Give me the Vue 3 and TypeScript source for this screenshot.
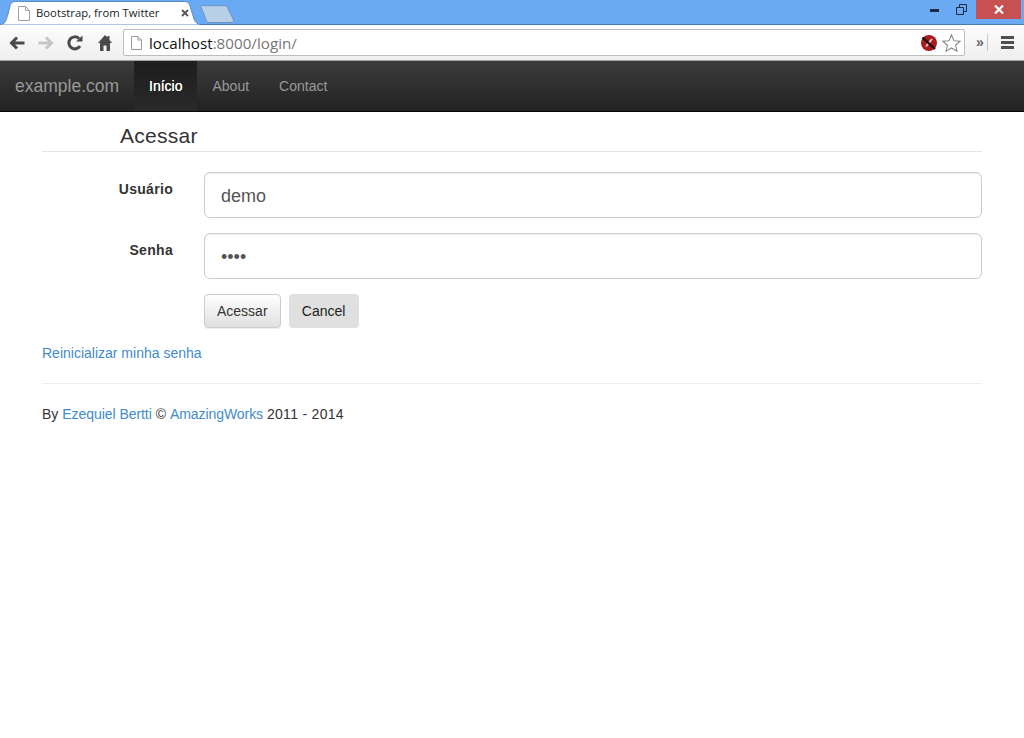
<script setup lang="ts">
const navItems: { label: string; active?: boolean }[] = [
  { label: 'Início', active: true },
  { label: 'About' },
  { label: 'Contact' },
]
</script>

<template>
  <div class="page">
    <div class="tabstrip">
      <div class="tab">
        <svg class="tab-shape" width="200" height="25" viewBox="0 0 200 25">
          <path d="M0 24.500C5 24.500 6 21 8 14L10 6C11 2.500 13 1.500 16 1.500H184C187 1.500 189 2.500 190 6L194 19C195 22.500 198 24.500 200 24.500V25H0Z" fill="#fff" stroke="#5f8ec4" stroke-width="1" />
        </svg>
        <svg class="doc" width="12" height="15" viewBox="0 0 12 15">
          <path d="M.5.5H7.500L11.500 4.500V14.500H.5Z M7.500.5V4.500H11.500" fill="#fff" stroke="#a0a0a0" />
        </svg>
        <span class="tab-title">Bootstrap, from Twitter</span>
        <svg class="tab-close" width="8" height="8" viewBox="0 0 8 8">
          <path d="M1 1L7 7M7 1L1 7" stroke="#555" stroke-width="1.800" />
        </svg>
      </div>
      <svg class="newtab" width="36" height="19" viewBox="0 0 36 19">
        <path d="M.8 1.500C.8 1 1 .7 2 .7H25C26.500 .7 27 1.500 27.500 2.500L33.500 15C34 16.500 33 17.500 32 17.500H9C7.500 17.500 7 17 6.500 16Z" fill="#b8cfe8" stroke="#6d93bd" />
      </svg>
      <div class="spacer"></div>
      <div class="win-btns">
        <svg width="9" height="3" viewBox="0 0 9 3" class="win-min"><rect width="9" height="3" fill="#1d2b3a" /></svg>
        <svg width="11" height="11" viewBox="0 0 11 11" class="win-max">
          <path d="M.5 3.500H7.500V10.500H.5Z M3.500 3V.5H10.500V7.500H8" fill="none" stroke="#1d2b3a" />
        </svg>
        <div class="win-close">
          <svg width="10" height="9" viewBox="0 0 10 9"><path d="M1 .5L9 8.500M9 .5L1 8.500" stroke="#fff" stroke-width="2.200" /></svg>
        </div>
      </div>
    </div>

    <div class="toolbar">
      <svg class="tool back" width="16" height="14" viewBox="0 0 16 14">
        <path d="M15.500 7H3M8 1.500L2.500 7L8 12.500" fill="none" stroke="#4a4a4a" stroke-width="3" />
      </svg>
      <svg class="tool fwd" width="16" height="14" viewBox="0 0 16 14">
        <path d="M.5 7H13M8 1.500L13.500 7L8 12.500" fill="none" stroke="#c6c6c6" stroke-width="3" />
      </svg>
      <svg class="tool reload" width="16" height="16" viewBox="0 0 16 16">
        <path d="M13 11A6 6 0 1 1 12 3.500" fill="none" stroke="#4a4a4a" stroke-width="3" />
        <path d="M9 6.500L15.500 .5V6.500Z" fill="#4a4a4a" />
      </svg>
      <svg class="tool home" width="14" height="16" viewBox="0 0 14 16">
        <path d="M7 0L0 8H2V16H5.500V10.500H8.500V16H12V8H14L11.500 5V1H9.500V2.500Z" fill="#4a4a4a" />
      </svg>
      <div class="omnibox">
        <svg class="omni-doc" width="11" height="14" viewBox="0 0 11 14">
          <path d="M.5.5H7L10.500 4V13.500H.5Z M7 .5V4H10.500" fill="#fff" stroke="#999" />
        </svg>
        <span class="url"><span class="host">localhost</span>:8000/login/</span>
        <div class="spacer"></div>
        <svg class="ext" width="16" height="16" viewBox="0 0 16 16">
          <circle cx="8" cy="8" r="8" fill="#a81c1f" />
          <path d="M5 11.500L11 4" stroke="#f2c4c4" stroke-width="2" />
          <path d="M1.500 2.500L14 14" stroke="#111" stroke-width="2.200" />
        </svg>
        <svg class="star" width="19" height="18" viewBox="0 0 19 18">
          <path d="M9.500 1L12 6.700L18.200 7.200L13.500 11.300L15 17.200L9.500 14L4 17.200L5.500 11.300L.8 7.200L7 6.700Z" fill="#fff" stroke="#8a8a8a" stroke-width="1.100" />
        </svg>
      </div>
      <span class="chevrons">»</span>
      <div class="sep"></div>
      <div class="menu"><i></i><i></i><i></i></div>
    </div>

    <nav class="navbar">
      <a class="brand">example.com</a>
      <ul class="nav">
        <li v-for="item in navItems" :key="item.label" :class="{ active: item.active }">{{ item.label }}</li>
      </ul>
    </nav>

    <main class="content">
      <h1 class="legend">Acessar</h1>
      <form class="form" @submit.prevent>
        <div class="group">
          <label class="label">Usuário</label>
          <input class="input" type="text" value="demo" />
        </div>
        <div class="group">
          <label class="label">Senha</label>
          <input class="input" type="password" value="demo" />
        </div>
        <div class="actions">
          <button class="btn" type="submit">Acessar</button>
          <button class="btn cancel" type="button">Cancel</button>
        </div>
      </form>
      <p class="reset"><a>Reinicializar minha senha</a></p>
      <hr class="rule" />
      <footer class="footer">By <a class="author">Ezequiel Bertti</a> © <a class="works">AmazingWorks</a> <span class="years">2011 - 2014</span></footer>
    </main>
  </div>
</template>

<style>
html, body { margin: 0; background: #fff; }
</style>

<style scoped>
.page {
  width: 1024px;
  height: 738px;
  overflow: hidden;
  font-family: "Liberation Sans", Arial, sans-serif;
  font-size: 14px;
  line-height: 20px;
  color: #333;
  background: #fff;
}
.spacer { flex: 1; }

.tabstrip {
  height: 25px;
  box-sizing: border-box;
  display: flex;
  background: #6aaaf5;
  border-bottom: 1px solid #4a7ab0;
}
.tab {
  position: relative;
  width: 200px;
  height: 25px;
  flex: none;
  display: flex;
  align-items: center;
}
.tab-shape { position: absolute; left: 0; top: 0; }
.doc { position: relative; margin: 2px 0 0 18px; }
.tab-title {
  position: relative;
  margin: 1px 0 0 6px;
  font-family: "Open Sans", "Noto Sans", sans-serif;
  font-size: 11.300px;
  color: #222;
  white-space: nowrap;
  width: 144px;
}
.tab-close { position: relative; margin: 1px 0 0 1px; }
.newtab { margin: 5px 0 0 0; flex: none; }
.win-btns { display: flex; align-items: flex-start; height: 19px; }
.win-min { margin: 9px 0 0 0; }
.win-max { margin: 4px 0 0 17px; }
.win-close {
  width: 45px;
  height: 19px;
  margin-left: 9px;
  margin-right: 3px;
  background: #c75050;
  display: flex;
  align-items: center;
  justify-content: center;
}

.toolbar {
  height: 36px;
  box-sizing: border-box;
  display: flex;
  align-items: center;
  background: linear-gradient(#fdfdfd, #eeeeee);
  border-bottom: 1px solid #a4a4a4;
}
.tool { flex: none; }
.back { margin-left: 9px; }
.fwd { margin-left: 13px; }
.reload { margin-left: 13px; }
.home { margin-left: 15px; margin-right: 11px; }
.omnibox {
  width: 842px;
  height: 27px;
  box-sizing: border-box;
  display: flex;
  align-items: center;
  background: #fff;
  border: 1px solid #bdbdbd;
  border-radius: 2px;
  flex: none;
}
.omni-doc { margin-left: 7px; flex: none; }
.url {
  margin-left: 7px;
  font-family: "Open Sans", "Noto Sans", sans-serif;
  font-size: 15.200px;
  color: #777;
  white-space: nowrap;
}
.host { color: #111; }
.ext { margin-right: 5px; flex: none; }
.star { margin-right: 3px; flex: none; }
.chevrons { margin-left: 11px; font-size: 14px; font-weight: bold; color: #666; line-height: 1; margin-top: -2px; }
.sep { width: 1px; height: 17px; margin-left: 3px; background: #c4c4c4; }
.menu { display: flex; flex-direction: column; gap: 2px; margin-left: 13px; }
.menu i { display: block; width: 13px; height: 3px; background: #505050; }

.navbar {
  height: 51px;
  box-sizing: border-box;
  display: flex;
  background: linear-gradient(#3b3b3b, #222222);
  border-bottom: 1px solid #080808;
}
.brand {
  margin-left: 15px;
  width: 119px;
  font-size: 17.500px;
  line-height: 50px;
  color: #999;
}
.nav { display: flex; margin: 0; padding: 0; list-style: none; }
.nav li {
  padding: 0 15px;
  line-height: 50px;
  color: #999;
}
.nav li.active {
  color: #fff;
  font-weight: 400;
  text-shadow: 0 0 .5px #fff;
  background: linear-gradient(#1d1d1d, #2a2a2a);
}

.content { padding: 0 42px; }
.legend {
  margin: 0;
  padding: 10px 0 0 78px;
  box-sizing: content-box;
  border-bottom: 1px solid #e5e5e5;
  font-size: 21px;
  font-weight: 400;
  line-height: 27px;
  letter-spacing: .28px;
  color: #333;
  height: 29px;
}
.form { padding-top: 20px; }
.group { display: flex; margin-bottom: 15px; }
.label {
  width: 131px;
  flex: none;
  padding-top: 7px;
  text-align: right;
  font-weight: 700;
  color: #333;
  line-height: 20px;
  height: 20px;
  letter-spacing: .3px;
}
.input {
  width: 778px;
  height: 46px;
  margin-left: 31px;
  box-sizing: border-box;
  padding: 11px 16px 9px;
  border: 1px solid #ccc;
  border-radius: 6px;
  outline: none;
  font-family: "Liberation Sans", Arial, sans-serif;
  font-size: 18px;
  line-height: 24px;
  color: #555;
  background: #fff;
  box-shadow: inset 0 1px 1px rgba(0, 0, 0, .075);
}
.actions { display: flex; gap: 8px; margin-left: 162px; }
.btn {
  height: 34px;
  box-sizing: border-box;
  padding: 6px 12px;
  border: 1px solid #ccc;
  border-radius: 4px;
  font-family: "Liberation Sans", Arial, sans-serif;
  font-size: 14px;
  line-height: 20px;
  color: #333;
  background: linear-gradient(#fff, #e0e0e0);
  box-shadow: 0 1px 1px rgba(0, 0, 0, .075);
}
.btn.cancel {
  width: 70px;
  padding: 6px 0;
  border: none;
  color: #222;
  background: #e0e0e0;
  box-shadow: none;
}
a { color: #428bca; }
.author { letter-spacing: -.05px; }
.works { letter-spacing: -.06px; }
.years { letter-spacing: .3px; }
.reset { margin: 15px 0 0; }
.rule { margin: 20px 0; border: 0; border-top: 1px solid #eee; }
</style>
